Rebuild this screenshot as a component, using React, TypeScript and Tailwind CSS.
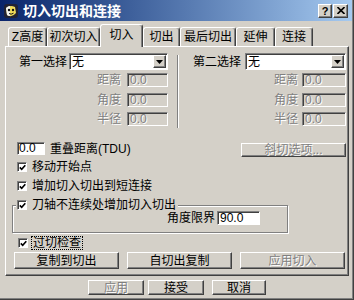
import React from "react";

const raised =
    "bg-[#d4d0c8] border border-t-white border-l-white border-r-[#404040] border-b-[#404040] shadow-[inset_-1px_-1px_0_#808080]";
const sunken =
    "border border-t-[#808080] border-l-[#808080] border-r-white border-b-white shadow-[inset_1px_1px_0_#404040]";
const dimText = "text-[#808080] [text-shadow:1px_1px_0_#ffffff]";

type BoxProps = { children?: React.ReactNode; className?: string; disabled?: boolean };

function Button({ children, className, disabled }: BoxProps) {
    return (
        <div className={`${raised} flex items-center justify-center ${disabled ? dimText : "text-black"} ${className ?? ""}`}>
            {children}
        </div>
    );
}

function Check() {
    return (
        <span className={`${sunken} bg-white w-[10px] h-[10px] flex items-center justify-center shrink-0`}>
            <svg width="7" height="7" viewBox="0 0 7 7">
                <path d="M0.8 3.4 L2.7 5.3 L6.3 1.2" stroke="#000" strokeWidth="1.6" fill="none" />
            </svg>
        </span>
    );
}

function Select({ className }: BoxProps) {
    return (
        <div className={`${sunken} bg-white h-[17px] flex items-center pl-[2px] pr-[1px] ${className ?? ""}`}>
            <span className="flex-1">无</span>
            <div className={`${raised} w-[13px] h-[13px] flex items-center justify-center`}>
                <svg width="7" height="4" viewBox="0 0 7 4">
                    <path d="M0 0 H7 L3.5 4 Z" fill="#000" />
                </svg>
            </div>
        </div>
    );
}

function DimField({ label, className, inputWidth, gap }: { label: string; className: string; inputWidth: string; gap: string }) {
    return (
        <div className={`flex items-center h-[14px] ${gap} ${className}`}>
            <span className={dimText}>{label}</span>
            <div className={`${sunken} ${inputWidth} h-[14px] bg-[#d4d0c8] flex items-center pl-[2px] ${dimText}`}>0.0</div>
        </div>
    );
}

function AppIcon() {
    return (
        <svg width="16" height="16" viewBox="0 0 16 16" className="shrink-0">
            <rect x="1" y="1" width="14" height="14" rx="3" fill="#222233" />
            <path d="M3 5 Q7 1.5 12 4 L13 10 Q9 15 4 12 Z" fill="#f2dc5a" />
            <path d="M3 5 Q5 3 7 3 L7 13 Q5 13 4 12 Z" fill="#f4f4f0" />
            <circle cx="6" cy="7" r="1.2" fill="#111" />
            <circle cx="10" cy="7" r="1.2" fill="#111" />
            <path d="M6 10.5 Q8 12 10.5 10.2" stroke="#111" strokeWidth="1" fill="none" />
        </svg>
    );
}

const tabs = [
    { label: "Z高度", w: "w-[39px]" },
    { label: "初次切入", w: "w-[53px]" },
    { label: "切入", w: "w-[43px]", active: true },
    { label: "切出", w: "w-[37px]" },
    { label: "最后切出", w: "w-[56px]" },
    { label: "延伸", w: "w-[39px]" },
    { label: "连接", w: "w-[38px]" },
];

export default function App() {
    return (
        <div className="w-[354px] h-[300px] overflow-hidden bg-[#d4d0c8] flex flex-col text-[12px] leading-[14px] text-black font-['Liberation_Sans','Noto_Sans_CJK_SC',sans-serif] shadow-[inset_-1px_-1px_0_#404040,inset_-2px_-2px_0_#808080]">
            {/* title bar */}
            <div className="h-[21px] mr-[2px] flex items-center bg-linear-to-r from-[#0a246a] to-[#a6caf0]">
                <div className="ml-[3px]">
                    <AppIcon />
                </div>
                <span className="ml-[4px] text-white font-bold text-[14px] leading-[16px]">切入切出和连接</span>
                <div className="ml-auto mr-[4px] flex gap-[1px]">
                    <Button className="w-[14px] h-[14px] font-bold text-[11px] leading-[12px]">?</Button>
                    <Button className="w-[15px] h-[14px]">
                        <svg width="8" height="7" viewBox="0 0 8 7">
                            <path d="M0.5 0 L7.5 7 M7.5 0 L0.5 7" stroke="#000" strokeWidth="1.6" />
                        </svg>
                    </Button>
                </div>
            </div>

            {/* tabs */}
            <div className="flex items-end h-[22px] mt-[3px] ml-[8px]">
                {tabs.map((tab) => (
                    <div
                        key={tab.label}
                        className={`${tab.w} flex items-center justify-center border-t border-l border-r border-t-white border-l-white border-r-[#404040] rounded-t-[3px] shadow-[inset_-1px_0_0_#808080] bg-[#d4d0c8] ${
                            tab.active ? "h-[23px] -mb-[1px] relative z-10 pb-[3px]" : "h-[19px]"
                        }`}
                    >
                        {tab.label}
                    </div>
                ))}
            </div>

            {/* panel */}
            <div className={`ml-[5px] w-[344px] h-[230px] flex flex-col pt-[6px] ${raised}`}>
                <div className="flex h-[73px]">
                    <div className="w-[171px] flex flex-col items-end pr-[9px]">
                        <div className="flex items-center gap-[2px] h-[17px]">
                            <span>第一选择</span>
                            <Select className="w-[99px]" />
                        </div>
                        <DimField label="距离" className="mt-[3px]" inputWidth="w-[41px]" gap="gap-[6px]" />
                        <DimField label="角度" className="mt-[6px]" inputWidth="w-[41px]" gap="gap-[6px]" />
                        <DimField label="半径" className="mt-[5px]" inputWidth="w-[41px]" gap="gap-[6px]" />
                    </div>
                    <div className="w-[2px] mt-[2px] h-[73px] border-l border-l-[#808080] border-r border-r-white" />
                    <div className="flex-1 flex flex-col items-end pr-[2px]">
                        <div className="flex items-center gap-[4px] h-[17px]">
                            <span>第二选择</span>
                            <Select className="w-[101px]" />
                        </div>
                        <DimField label="距离" className="mt-[3px]" inputWidth="w-[44px]" gap="gap-[4px]" />
                        <DimField label="角度" className="mt-[6px]" inputWidth="w-[44px]" gap="gap-[4px]" />
                        <DimField label="半径" className="mt-[5px]" inputWidth="w-[44px]" gap="gap-[4px]" />
                    </div>
                </div>

                <div className="flex items-start mt-[16px] h-[15px]">
                    <div className={`${sunken} bg-white w-[28px] h-[13px] ml-[11px] flex items-center pl-[1px] leading-[11px]`}>0.0</div>
                    <span className="ml-[5px]">重叠距离(TDU)</span>
                    <Button disabled className="ml-auto mr-[2px] mt-[1px] w-[105px] h-[14px]">
                        斜切选项...
                    </Button>
                </div>

                <div className="flex items-center gap-[5px] h-[14px] mt-[3px] ml-[11px]">
                    <Check />
                    <span>移动开始点</span>
                </div>
                <div className="flex items-center gap-[5px] h-[14px] mt-[5px] ml-[11px]">
                    <Check />
                    <span>增加切入切出到短连接</span>
                </div>
                <div className="relative z-10 flex h-[14px] mt-[5px] ml-[10px]">
                    <div className="flex items-center gap-[5px] pl-[1px] pr-[2px] bg-[#d4d0c8]">
                        <Check />
                        <span>刀轴不连续处增加切入切出</span>
                    </div>
                </div>
                <div className="-mt-[7px] ml-[6px] w-[276px] h-[28px] shrink-0 border border-[#808080] shadow-[inset_1px_1px_0_#ffffff,1px_1px_0_#ffffff] flex justify-end items-start pt-[5px] pr-[27px]">
                    <div className="flex items-center gap-[2px] h-[14px]">
                        <span>角度限界</span>
                        <div className={`${sunken} bg-white w-[43px] h-[14px] flex items-center pl-[2px]`}>90.0</div>
                    </div>
                </div>

                <div className="flex items-center gap-[3px] h-[14px] mt-[3px] ml-[12px]">
                    <Check />
                    <span className="border border-dotted border-black px-[1px] leading-[12px]">过切检查</span>
                </div>

                <div className="flex gap-[8px] mt-[2px] ml-[8px]">
                    <Button className="w-[105px] h-[17px]">复制到切出</Button>
                    <Button className="w-[105px] h-[17px]">自切出复制</Button>
                    <Button disabled className="w-[105px] h-[17px]">
                        应用切入
                    </Button>
                </div>
            </div>

            {/* dialog buttons */}
            <div className="flex mt-[4px] ml-[88px]">
                <Button disabled className="w-[56px] h-[15px]">
                    应用
                </Button>
                <Button className="w-[56px] h-[15px] ml-[4px]">接受</Button>
                <Button className="w-[54px] h-[15px] ml-[8px]">取消</Button>
            </div>
        </div>
    );
}
